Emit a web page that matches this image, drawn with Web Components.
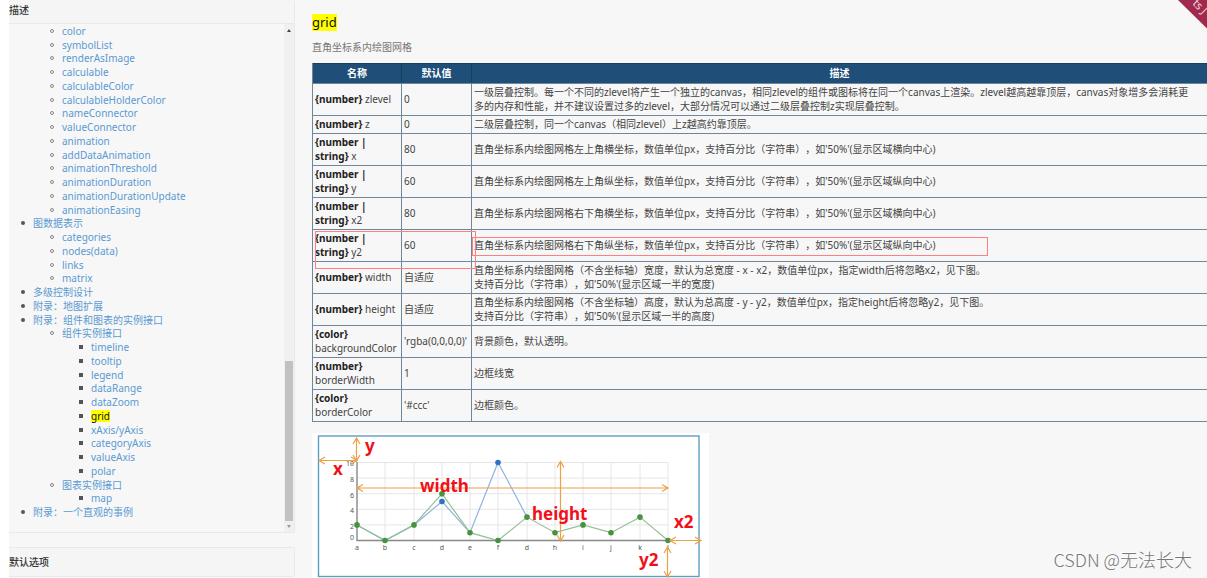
<!DOCTYPE html>
<html lang="zh-CN">
<head>
<meta charset="utf-8">
<title>grid</title>
<style>
  body {
    margin: 0;
    background: #fff;
    color: #444;
    font: 10px/14px "Noto Sans", "Noto Sans CJK SC", sans-serif;
    text-spacing-trim: space-all;
    overflow: hidden;
  }
</style>
</head>
<body>
<doc-shell>
  <side-panel slot="side" class="tall">
    <span slot="heading">描述</span>
    <tree-nav></tree-nav>
    <scroll-track></scroll-track>
  </side-panel>
  <side-panel slot="side"><span slot="heading">默认选项</span></side-panel>
  <doc-section>
    <mark-text slot="title">grid</mark-text>
    <span slot="lead">直角坐标系内绘图网格</span>
    <prop-table></prop-table>
    <grid-figure></grid-figure>
  </doc-section>
</doc-shell>
<corner-ribbon></corner-ribbon>
<water-mark>CSDN @无法长大</water-mark>

<script>
const define = (name, html, setup) => customElements.define(name, class extends HTMLElement {
  constructor() {
    super();
    const root = this.attachShadow({ mode: "open" });
    root.innerHTML = html;
    if (setup) setup(root);
  }
});

define("doc-shell", `
  <style>
    :host { display: grid; grid-template-columns: 286px minmax(0, 1fr); margin-left: 9px; background: #f7f7f7; min-height: 100vh; }
    aside { display: flex; flex-direction: column; gap: 14px; }
    main { padding-left: 17px; min-width: 0; }
  </style>
  <aside><slot name="side"></slot></aside>
  <main><slot></slot></main>`);

define("side-panel", `
  <style>
    :host { display: block; border: solid #e9e9e9; border-width: 1px 1px 1px 0; border-radius: 0 3px 3px 0; }
    :host(.tall) { border-top: 0; }
    h2 { margin: 0; font-size: 10px; line-height: 14px; font-weight: 500; color: #333; background: #f5f5f5; padding: 7px 0; }
    :host(.tall) h2 { padding: 3px 0 6px; border-bottom: 1px solid #e9e9e9; }
    div { display: flex; }
    :host(.tall) div { height: 508px; }
  </style>
  <h2><slot name="heading"></slot></h2>
  <div><slot></slot></div>`);

define("mark-text", `
  <style>:host { display: inline-block; background: #ff0; color: #111; }</style><slot></slot>`);

const tree = [
  ["", [
    "color", "symbolList", "renderAsImage", "calculable", "calculableColor", "calculableHolderColor",
    "nameConnector", "valueConnector", "animation", "addDataAnimation", "animationThreshold",
    "animationDuration", "animationDurationUpdate", "animationEasing"]],
  ["图数据表示", ["categories", "nodes(data)", "links", "matrix"]],
  "多级控制设计",
  "附录：地图扩展",
  ["附录：组件和图表的实例接口", [
    ["组件实例接口", ["timeline", "tooltip", "legend", "dataRange", "dataZoom", "grid",
      "xAxis/yAxis", "categoryAxis", "valueAxis", "polar"]],
    ["图表实例接口", ["map"]]]],
  "附录：一个直观的事例"
];
const branch = (items, level) => `<ul>${items.map(item => {
  const [label, kids] = Array.isArray(item) ? item : [item];
  const text = label === "grid" ? `<mark-text>${label}</mark-text>` : label;
  return `<li>${label ? `<span class="l${level}"><a href="#${label}">${text}</a></span>` : ""}${kids ? branch(kids, level + 1) : ""}</li>`;
}).join("")}</ul>`;

define("tree-nav", `
  <style>
    :host { flex: 1; display: grid; grid-auto-rows: 1fr; padding-bottom: 13px; }
    nav, ul, li { display: contents; }
    span { display: flex; align-items: center; line-height: 12px; min-height: 0; }
    span::before { content: ""; box-sizing: border-box; width: 4px; height: 4px; margin-right: 8px; background: #555; }
    .l1 { padding-left: 12px; } .l2 { padding-left: 41px; } .l3 { padding-left: 70px; }
    .l1::before { border-radius: 2px; }
    .l2::before { border-radius: 2px; background: none; border: 1px solid #888; }
    a { color: #5a9ad2; text-decoration: none; }
  </style>
  <nav>${branch(tree, 1)}</nav>`);

define("scroll-track", `
  <style>
    :host { display: flex; flex-direction: column; width: 10px; background: #f0f0f0; }
    svg { display: block; }
    .before { flex: 326; } .thumb { flex: 160; margin: 0 1px; background: #c1c1c1; }
  </style>
  <svg width="10" height="11"><path d="M3 8l2-3 2 3z" fill="#444"/></svg>
  <div class="before"></div><div class="thumb"></div>
  <svg width="10" height="11"><path d="M3 4l2 3 2-3z" fill="#999"/></svg>`);

define("doc-section", `
  <style>
    :host { display: block; }
    h1 { margin: 0; padding: 14px 0 9px; font-size: 13px; line-height: 17px; font-weight: 400; }
    p { margin: 0 0 9px; color: #777; }
  </style>
  <h1><slot name="title"></slot></h1>
  <p><slot name="lead"></slot></p>
  <slot></slot>`);

const pos = (side, axis) => `直角坐标系内绘图网格${side}角${axis}坐标，数值单位px，支持百分比（字符串），如'50%'(显示区域${axis}向中心)`;
const size = (cn, en, a) => `直角坐标系内绘图网格（不含坐标轴）${cn}，默认为总${cn} - ${a} - ${a}2，数值单位px，指定${en}后将忽略${a}2，见下图。<br>支持百分比（字符串），如'50%'(显示区域一半的${cn})`;
const rows = [
  ["number", "zlevel", "0", "一级层叠控制。每一个不同的zlevel将产生一个独立的canvas，相同zlevel的组件或图标将在同一个canvas上渲染。zlevel越高越靠顶层，canvas对象增多会消耗更多的内存和性能，并不建议设置过多的zlevel，大部分情况可以通过二级层叠控制z实现层叠控制。"],
  ["number", "z", "0", "二级层叠控制，同一个canvas（相同zlevel）上z越高约靠顶层。"],
  ["number | string", "x", "80", pos("左上", "横")],
  ["number | string", "y", "60", pos("左上", "纵")],
  ["number | string", "x2", "80", pos("右下", "横")],
  ["number | string", "y2", "60", pos("右下", "纵")],
  ["number", "width", "自适应", size("宽度", "width", "x")],
  ["number", "height", "自适应", size("高度", "height", "y")],
  ["color", "backgroundColor", "'rgba(0,0,0,0)'", "背景颜色，默认透明。"],
  ["number", "borderWidth", "1", "边框线宽"],
  ["color", "borderColor", "'#ccc'", "边框颜色。"]
];

define("prop-table", `
  <style>
    :host { display: block; }
    table { width: 100%; table-layout: fixed; border-collapse: separate; border-spacing: 0; border: solid #70879b; border-width: 0 0 1px 1px; }
    .name { width: 89px; } .value { width: 70px; }
    th, td { box-sizing: border-box; border: solid #70879b; border-width: 1px 1px 0 0; text-align: left; font-weight: 400; vertical-align: middle; padding: 1px 0 2px 2px; position: relative; }
    thead th { background: #1f4e79; color: #fff; font-weight: 700; text-align: center; padding: 2px 2px 3px; border-color: #17405f; }
    tr > :last-child { border-right: 0; }
    td:last-child { padding-right: 10px; }
    b { color: #222; }
    i { position: absolute; box-sizing: border-box; border: 1px solid #ff8080; pointer-events: none; z-index: 1; }
    .wide { left: 2px; top: 1px; width: 161px; height: 38px; }
    .line { left: 0; top: 7px; width: 516px; height: 19px; }
  </style>
  <table>
    <colgroup><col class="name"><col class="value"><col></colgroup>
    <thead><tr><th scope="col">名称</th><th scope="col">默认值</th><th scope="col">描述</th></tr></thead>
    <tbody>${rows.map(([type, name, value, text]) => `<tr>
      <th scope="row"><b>{${type.replace("| ", "|</b><br><b>")}}</b> ${name}${name === "y2" ? '<i class="wide"></i>' : ""}</th>
      <td>${value}</td><td>${text}${name === "y2" ? '<i class="line"></i>' : ""}</td></tr>`).join("")}</tbody>
  </table>`);

const xs = [45, 73, 102, 130, 158, 186, 215, 243, 271, 299, 328, 356];
const green = [2, 0, 2, 6, 1, 0, 3, 1, 2, 1, 3, 0];
const blue = [2, 0, 2, 5, 1, 10, 3];
const yOf = v => 107.5 - 7.8 * v;
const line = vals => vals.map((v, i) => `${xs[i]},${yOf(v)}`).join(" ");
const dots = (vals, fill) => vals.map((v, i) => `<circle cx="${xs[i]}" cy="${yOf(v)}" r="2.8" fill="${fill}"/>`).join("");
const arrow = (x1, y1, x2, y2) => {
  const heads = y1 === y2
    ? `M${x1 + 6} ${y1 - 3.5}L${x1} ${y1}l6 3.5M${x2 - 6} ${y2 - 3.5}L${x2} ${y2}l-6 3.5`
    : `M${x1 - 3.5} ${y1 + 6}L${x1} ${y1}l3.5 6M${x2 - 3.5} ${y2 - 6}L${x2} ${y2}l3.5 -6`;
  return `<path d="M${x1} ${y1}L${x2} ${y2}${heads}"/>`;
};

define("grid-figure", `
  <style>
    :host { display: block; margin-top: 11px; }
    svg { display: block; background: #fff; }
    .tick { font-size: 7px; fill: #555; }
    .big { font-size: 17px; font-weight: 700; fill: #f0101a; }
  </style>
  <svg width="397" height="145" viewBox="0 0 397 145" role="img" aria-label="grid">
    <rect x="6.5" y="3" width="380.5" height="140.5" fill="none" stroke="#5c9fc0" stroke-width="1.4"/>
    <g stroke="#e6e6e6">${xs.slice(1).map(x => `<path d="M${x} 29.5V107"/>`).join("")}${[2, 4, 6, 8, 10].map(v => `<path d="M45 ${yOf(v)}H356"/>`).join("")}</g>
    <path d="M45 29V107.5H356" fill="none" stroke="#888" stroke-width="1.4"/>
    <g class="tick" text-anchor="end">${[[0, 107], [2, 96], [4, 80], [6, 65], [8, 49], [10, 33]].map(([v, y]) => `<text x="42" y="${y}">${v}</text>`).join("")}</g>
    <g class="tick" text-anchor="middle">${[..."abcdefdhijkl"].map((c, i) => `<text x="${xs[i]}" y="117">${c}</text>`).join("")}</g>
    <polyline points="${line(blue)}" fill="none" stroke="#8fb4de" stroke-width="1.2"/>
    <polyline points="${line(green)}" fill="none" stroke="#94c094" stroke-width="1.2"/>
    <circle cx="130" cy="${yOf(5)}" r="2.8" fill="#2c73c7"/><circle cx="186" cy="${yOf(10)}" r="2.8" fill="#2c73c7"/>
    ${dots(green, "#45923f")}
    <g fill="none" stroke="#eda044" stroke-width="1.2">
      ${arrow(7, 27.5, 45, 27.5)}${arrow(44.5, 5, 44.5, 28)}${arrow(45, 55, 356, 55)}
      ${arrow(248.5, 28.5, 248.5, 108)}${arrow(358, 107.5, 389, 107.5)}${arrow(355.5, 114, 355.5, 144)}
    </g>
    <g class="big">
      <text x="53" y="19">y</text><text x="21" y="42">x</text><text x="108" y="59">width</text>
      <text x="220" y="87">height</text><text x="362" y="95">x2</text><text x="327" y="133">y2</text>
    </g>
  </svg>`);

define("corner-ribbon", `
  <style>
    :host { position: absolute; top: 0; right: 0; }
    svg { display: block; overflow: hidden; }
    text { font-size: 11px; fill: #f3dfe5; }
  </style>
  <svg width="29" height="29" viewBox="0 0 29 29">
    <path d="M0 0H29V28.5z" fill="#a12a4c"/>
    <text transform="translate(14 4) rotate(45)">ts J</text>
  </svg>`);

define("water-mark", `
  <style>
    :host { position: absolute; right: 15px; bottom: 7px; font: 300 18px/24px "Noto Sans CJK SC", sans-serif; color: #777; text-shadow: -1px -1px 0 #fff; }
  </style><slot></slot>`);
</script>
</body>
</html>
